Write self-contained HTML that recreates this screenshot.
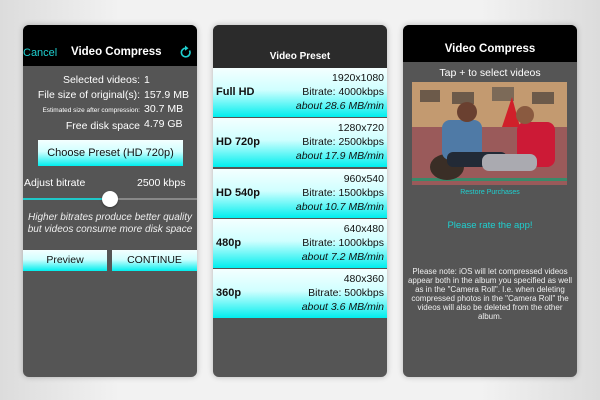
<!DOCTYPE html>
<html><head><style>
*{margin:0;padding:0;box-sizing:border-box}
body{width:600px;height:400px;background:linear-gradient(90deg,#dcdcdc,#f2f2f2 20%,#f2f2f2 80%,#dcdcdc);font-family:"Liberation Sans",sans-serif;position:relative;overflow:hidden}
.p{position:absolute;top:25px;width:174px;height:352px;background:#555;border-radius:6px;overflow:hidden;box-shadow:0 0 6px rgba(0,0,0,.25)}
.a{position:absolute;color:#fff;font-size:11px;white-space:nowrap}
.cy{background:linear-gradient(#f4ffff,#d0ffff 45%,#00eeee)}
.row{position:absolute;left:0;width:174px;height:49px;color:#111}
.row .l{position:absolute;left:3px;top:18px;font-weight:bold;font-size:11px}
.row .r{position:absolute;right:3px;top:3px;text-align:right;font-size:10.5px;line-height:14px}
</style></head><body>
<div class="p" style="left:23px">
 <div style="position:absolute;left:0;top:0;width:174px;height:41px;background:#000"></div>
 <div class="a" style="left:0;top:22px;color:#1fd0d0;font-size:11px">Cancel</div>
 <div class="a" style="left:48px;top:21px;font-weight:bold;font-size:11.5px">Video Compress</div>
 <svg style="position:absolute;left:157px;top:20px" width="12" height="14" viewBox="0 0 12 14"><path d="M9.5 5.5A4.3 4.3 0 1 1 6 3.2" fill="none" stroke="#1fd0d0" stroke-width="1.6"/><path d="M5 0.5L8.5 3.2L5 5.8Z" fill="#1fd0d0"/></svg>
 <div class="a" style="right:57px;top:48px;text-align:right;line-height:14.5px;font-size:10.5px">Selected videos:<br>File size of original(s):<br><span style="font-size:6.5px">Estimated size after compression:</span><br>Free disk space</div>
 <div class="a" style="left:121px;top:48px;line-height:14.5px;font-size:10.5px">1<br>157.9 MB<br>30.7 MB<br>4.79 GB</div>
 <div class="cy" style="position:absolute;left:15px;top:115px;width:145px;height:26px;color:#111;font-size:11px;text-align:center;line-height:26px">Choose Preset (HD 720p)</div>
 <div class="a" style="left:1px;top:152px;font-size:10.5px">Adjust bitrate</div>
 <div class="a" style="left:114px;top:152px;font-size:10.5px">2500 kbps</div>
 <div style="position:absolute;left:0;top:173px;width:87px;height:2px;background:#1fc8c8"></div>
 <div style="position:absolute;left:87px;top:173px;width:87px;height:2px;background:#888"></div>
 <div style="position:absolute;left:79px;top:166px;width:16px;height:16px;border-radius:50%;background:#fff;box-shadow:0 1px 2px rgba(0,0,0,.4)"></div>
 <div class="a" style="left:0;width:174px;top:187px;text-align:center;font-style:italic;font-size:10px;line-height:12px;color:#eee">Higher bitrates produce better quality<br>but videos consume more disk space</div>
 <div class="cy" style="position:absolute;left:0;top:225px;width:84px;height:21px;color:#111;font-size:10.5px;text-align:center;line-height:21px">Preview</div>
 <div class="cy" style="position:absolute;left:89px;top:225px;width:85px;height:21px;color:#111;font-size:10.5px;text-align:center;line-height:21px">CONTINUE</div>
</div>
<div class="p" style="left:213px">
 <div style="position:absolute;left:0;top:0;width:174px;height:43px;background:#2b2b2b"></div>
 <div class="a" style="left:0;width:174px;text-align:center;top:26px;font-weight:bold;font-size:10px">Video Preset</div>
 <div class="row cy" style="top:43px"><div class="l">Full HD</div><div class="r">1920x1080<br>Bitrate: 4000kbps<br><i>about 28.6 MB/min</i></div></div>
 <div class="row cy" style="top:93px"><div class="l">HD 720p</div><div class="r">1280x720<br>Bitrate: 2500kbps<br><i>about 17.9 MB/min</i></div></div>
 <div class="row cy" style="top:144px"><div class="l">HD 540p</div><div class="r">960x540<br>Bitrate: 1500kbps<br><i>about 10.7 MB/min</i></div></div>
 <div class="row cy" style="top:194px"><div class="l">480p</div><div class="r">640x480<br>Bitrate: 1000kbps<br><i>about 7.2 MB/min</i></div></div>
 <div class="row cy" style="top:244px"><div class="l">360p</div><div class="r">480x360<br>Bitrate: 500kbps<br><i>about 3.6 MB/min</i></div></div>
</div>
<div class="p" style="left:403px">
 <div style="position:absolute;left:0;top:0;width:174px;height:37px;background:#000"></div>
 <div class="a" style="left:0;width:174px;text-align:center;top:18px;font-weight:bold;font-size:11.5px">Video Compress</div>
 <div class="a" style="left:0;width:174px;text-align:center;top:42px;font-size:10.5px">Tap + to select videos</div>
 <svg style="position:absolute;left:9px;top:57px" width="155" height="103" viewBox="0 0 155 103">
  <rect width="155" height="103" fill="#b58c66"/>
  <rect y="0" width="155" height="45" fill="#c39a70"/>
  <rect x="8" y="8" width="20" height="12" fill="#6c5a4a"/><rect x="40" y="10" width="22" height="12" fill="#6c5a4a"/><rect x="80" y="5" width="22" height="14" fill="#7c6a58"/><rect x="120" y="10" width="22" height="12" fill="#6c5a4a"/>
  <rect y="45" width="155" height="58" fill="#9a5a5a"/>
  <polygon points="90,45 100,15 108,45" fill="#d0202a"/>
  <rect x="0" y="96" width="155" height="3" fill="#3a8a6a"/>
  <ellipse cx="35" cy="85" rx="17" ry="13" fill="#3a2e26"/>
  <rect x="30" y="38" width="40" height="40" rx="8" fill="#4f7aa6"/>
  <rect x="35" y="70" width="60" height="15" rx="6" fill="#222a36"/>
  <circle cx="55" cy="30" r="10" fill="#6a4030"/>
  <rect x="105" y="40" width="38" height="45" rx="8" fill="#cc1a36"/>
  <rect x="70" y="72" width="55" height="17" rx="7" fill="#aaaab0"/>
  <circle cx="113" cy="33" r="9" fill="#8a5a40"/>
 </svg>
 <div class="a" style="left:0;width:174px;text-align:center;top:164px;font-size:7px;color:#1fd0d0">Restore Purchases</div>
 <div class="a" style="left:0;width:174px;text-align:center;top:195px;font-size:9.5px;color:#1fd0d0">Please rate the app!</div>
 <div class="a" style="left:0;width:174px;text-align:center;top:242px;font-size:8px;line-height:9px;color:#eee;white-space:normal;padding:0 4px">Please note: iOS will let compressed videos appear both in the album you specified as well as in the "Camera Roll". I.e. when deleting compressed photos in the "Camera Roll" the videos will also be deleted from the other album.</div>
</div>
</body></html>
